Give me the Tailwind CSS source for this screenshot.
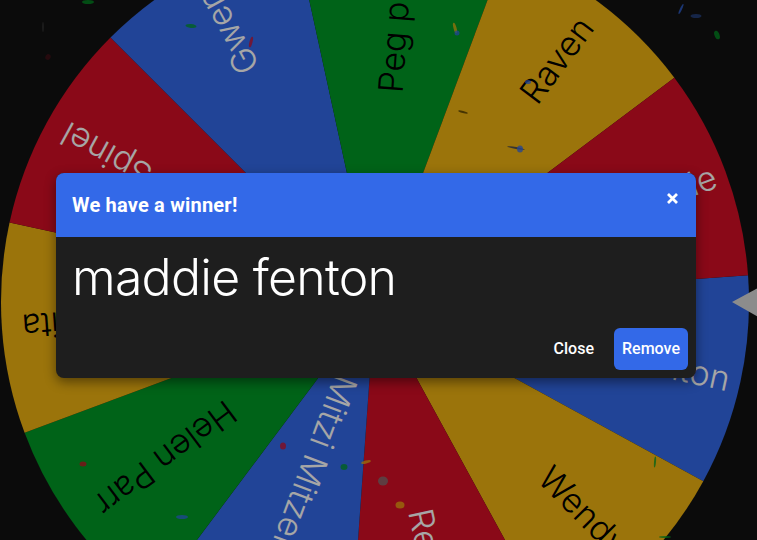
<!DOCTYPE html>
<html lang="en">
<head>
  <meta charset="UTF-8" />
  <title>Wheel of Names</title>
  <script src="https://cdn.jsdelivr.net/npm/@tailwindcss/browser@4"></script>
</head>
<body class="bg-[#121212] w-[757px] h-[540px] overflow-hidden relative font-['Roboto',sans-serif]">
  <!-- wheel canvas -->
  <svg id="wheel" class="absolute inset-0" width="757" height="540" viewBox="0 0 757 540"></svg>

  <!-- dimmed backdrop + dialog -->
  <div class="absolute inset-0 bg-black/35 pl-[56px] pt-[173px]">
    <div class="w-[640px] h-[205px] rounded-lg overflow-hidden bg-[#1e1e1e] flex flex-col shadow-[0_4px_12px_rgba(0,0,0,0.45)]">
      <header class="h-16 shrink-0 bg-[#3369e8] flex items-start justify-between pl-4 pr-[18px]">
        <h2 class="mt-[18px] text-xl leading-7 font-bold tracking-[0.2px] text-white">We have a winner!</h2>
        <button class="mt-5 text-white" aria-label="Close">
          <svg width="11" height="11" viewBox="0 0 11 11"><path d="M1 1 L10 10 M10 1 L1 10" stroke="#fff" stroke-width="2.8" fill="none" /></svg>
        </button>
      </header>
      <div class="flex-1 flex flex-col justify-between">
        <p class="pl-4 pt-[10px] text-[50px] leading-[60px] tracking-[-0.75px] font-light text-white font-['Inter',sans-serif]">maddie fenton</p>
        <div class="flex justify-end items-center gap-3 pr-2 pb-2">
          <button class="h-[42px] px-2 rounded-md text-base font-medium text-white">Close</button>
          <button class="h-[42px] w-[74px] rounded-md bg-[#3369e8] text-base font-medium text-white">Remove</button>
        </div>
      </div>
    </div>
  </div>

  <script>
    const NS = 'http://www.w3.org/2000/svg';
    const svg = document.getElementById('wheel');
    const cx = 375, cy = 302, R = 374;
    const step = 360 / 11, start = -4.1;
    const BLUE = '#3369e8', RED = '#d50f25', GREEN = '#009925', YELLOW = '#eeb211';

    // name, colour, ink, radius, anchor
    const slices = [
      ['maddie fenton', BLUE, '#fff', 363, 'end'],
      ['Wendy', YELLOW, '#000', 240, 'start'],
      ['Rebecca', RED, '#fff', 212, 'start'],
      ['Mitzi Mitzelplik', BLUE, '#fff', 80, 'start'],
      ['Helen Parr', GREEN, '#000', 178, 'start'],
      ['Anita', YELLOW, '#000', 354, 'end'],
      ['Spinel', RED, '#fff', 355, 'end'],
      ['Gwen', BLUE, '#fff', 262, 'start'],
      ['Peg pan', GREEN, '#000', 210, 'start'],
      ['Raven', YELLOW, '#000', 254, 'start'],
      ['Jade', RED, '#fff', 363, 'end'],
    ];

    function el(name, attrs, text) {
      const n = document.createElementNS(NS, name);
      for (const k in attrs) n.setAttribute(k, attrs[k]);
      if (text) n.textContent = text;
      svg.appendChild(n);
      return n;
    }

    function pt(deg) {
      const a = deg * Math.PI / 180;
      return [cx + R * Math.cos(a), cy + R * Math.sin(a)];
    }

    slices.forEach((s, i) => {
      const a0 = start + i * step, a1 = a0 + step;
      const [x0, y0] = pt(a0), [x1, y1] = pt(a1);
      el('path', { d: `M${cx} ${cy} L${x0} ${y0} A${R} ${R} 0 0 1 ${x1} ${y1} Z`, fill: s[1] });
      el('text', {
        x: cx + s[3], y: cy,
        transform: `rotate(${a0 + step / 2} ${cx} ${cy})`,
        fill: s[2],
        'font-family': 'Inter, sans-serif',
        'font-size': 34,
        'font-weight': 300,
        'text-anchor': s[4],
        'dominant-baseline': 'central',
      }, s[0]);
    });

    // pointer
    el('path', { d: 'M732 302 L760 287 L760 318 Z', fill: '#d8d8d8' });

    // confetti: x, y, w, h, angle, colour
    const confetti = [
      [88, 2, 12, 4, 0, GREEN], [191, 26, 11, 4, 5, GREEN], [251, 42, 3, 11, 15, RED],
      [43, 27, 2, 10, 0, '#333'], [48, 57, 5, 6, 30, '#4a1018'], [455, 28, 3, 11, -15, YELLOW],
      [457, 33, 5, 5, 0, BLUE], [463, 112, 10, 2, 15, '#403000'], [516, 148, 18, 2, 10, '#203060'],
      [520, 149, 6, 7, 0, BLUE], [528, 82, 6, 4, 0, BLUE], [681, 9, 2, 11, 25, BLUE],
      [696, 16, 11, 4, 0, '#2a4a90'], [717, 35, 5, 9, -20, GREEN], [283, 446, 6, 7, 0, RED],
      [344, 467, 7, 6, 0, GREEN], [366, 462, 10, 3, -15, YELLOW], [383, 481, 10, 9, 0, '#7a7a7a'],
      [400, 505, 9, 7, 0, YELLOW], [83, 464, 7, 5, 0, RED], [182, 517, 12, 4, 0, BLUE],
      [655, 462, 2, 11, 5, GREEN], [665, 537, 12, 2, 0, GREEN],
    ];
    confetti.forEach(([x, y, w, h, a, c]) => {
      el('ellipse', { cx: x, cy: y, rx: w / 2, ry: h / 2, fill: c, opacity: 0.75, transform: `rotate(${a} ${x} ${y})` });
    });
  </script>
</body>
</html>
